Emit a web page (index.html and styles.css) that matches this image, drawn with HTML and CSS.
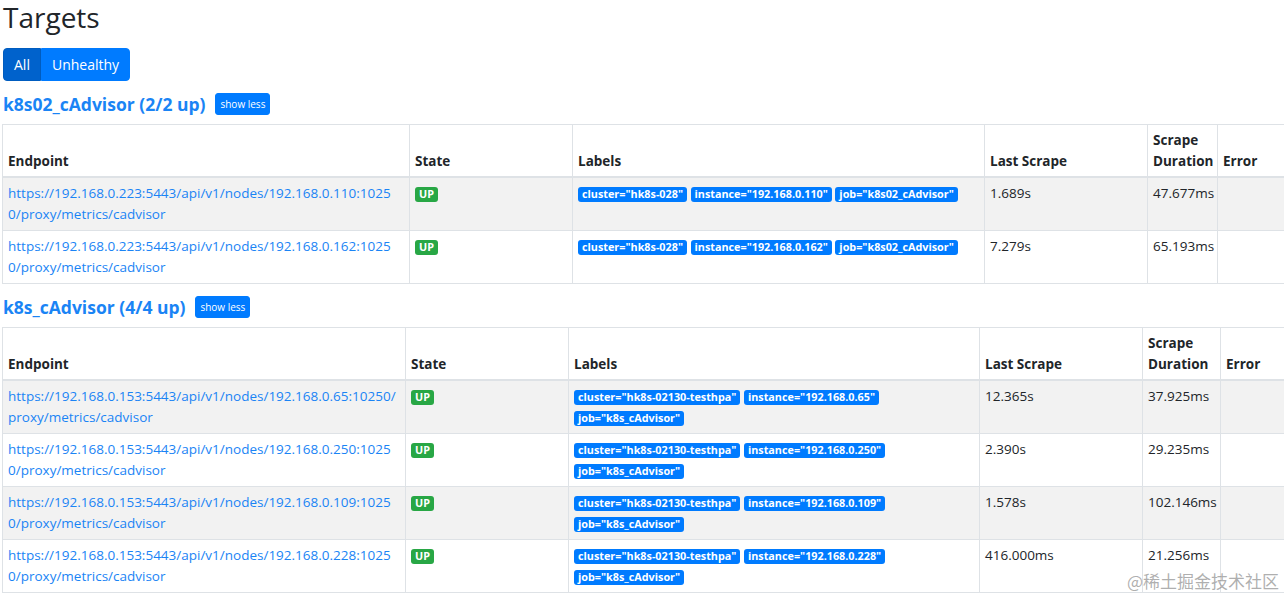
FILE: index.html
```html
<!DOCTYPE html>
<html lang="en">
<head>
    <meta charset="UTF-8">
    <meta name="viewport" content="width=device-width, initial-scale=1.0">
    <title>Prometheus Time Series Collection and Processing Server</title>
    <link rel="stylesheet" href="styles.css">
</head>
<body>
    <div class="container">
        <h1 class="title">Targets</h1>

        <!-- Filter -->
        <div class="btn-group">
            <button class="btn btn-primary active">All</button>
            <button class="btn btn-primary">Unhealthy</button>
        </div>

        <!-- Pool: k8s02_cAdvisor -->
        <section class="pool">
            <div class="pool-head">
                <a class="pool-name" href="#pool-k8s02_cAdvisor">k8s02_cAdvisor (2/2 up)</a>
                <button class="btn btn-primary btn-xs">show less</button>
            </div>
            <table class="table targets targets-a">
                <colgroup>
                    <col class="col-endpoint">
                    <col class="col-state">
                    <col class="col-labels">
                    <col class="col-last">
                    <col class="col-duration">
                    <col>
                </colgroup>
                <thead>
                    <tr>
                        <th>Endpoint</th>
                        <th>State</th>
                        <th>Labels</th>
                        <th>Last Scrape</th>
                        <th>Scrape Duration</th>
                        <th>Error</th>
                    </tr>
                </thead>
                <tbody>
                    <tr>
                        <td class="endpoint"><a href="#">https://192.168.0.223:5443/api/v1/nodes/192.168.0.110:10250/proxy/metrics/cadvisor</a></td>
                        <td><span class="badge badge-success">UP</span></td>
                        <td class="labels">
                            <span class="badge badge-primary">cluster="hk8s-028"</span>
                            <span class="badge badge-primary">instance="192.168.0.110"</span>
                            <span class="badge badge-primary">job="k8s02_cAdvisor"</span>
                        </td>
                        <td>1.689s</td>
                        <td>47.677ms</td>
                        <td></td>
                    </tr>
                    <tr>
                        <td class="endpoint"><a href="#">https://192.168.0.223:5443/api/v1/nodes/192.168.0.162:10250/proxy/metrics/cadvisor</a></td>
                        <td><span class="badge badge-success">UP</span></td>
                        <td class="labels">
                            <span class="badge badge-primary">cluster="hk8s-028"</span>
                            <span class="badge badge-primary">instance="192.168.0.162"</span>
                            <span class="badge badge-primary">job="k8s02_cAdvisor"</span>
                        </td>
                        <td>7.279s</td>
                        <td>65.193ms</td>
                        <td></td>
                    </tr>
                </tbody>
            </table>
        </section>

        <!-- Pool: k8s_cAdvisor -->
        <section class="pool">
            <div class="pool-head">
                <a class="pool-name" href="#pool-k8s_cAdvisor">k8s_cAdvisor (4/4 up)</a>
                <button class="btn btn-primary btn-xs">show less</button>
            </div>
            <table class="table targets targets-b">
                <colgroup>
                    <col class="col-endpoint">
                    <col class="col-state">
                    <col class="col-labels">
                    <col class="col-last">
                    <col class="col-duration">
                    <col>
                </colgroup>
                <thead>
                    <tr>
                        <th>Endpoint</th>
                        <th>State</th>
                        <th>Labels</th>
                        <th>Last Scrape</th>
                        <th>Scrape Duration</th>
                        <th>Error</th>
                    </tr>
                </thead>
                <tbody>
                    <tr>
                        <td class="endpoint"><a href="#">https://192.168.0.153:5443/api/v1/nodes/192.168.0.65:10250/proxy/metrics/cadvisor</a></td>
                        <td><span class="badge badge-success">UP</span></td>
                        <td class="labels">
                            <span class="badge badge-primary">cluster="hk8s-02130-testhpa"</span>
                            <span class="badge badge-primary">instance="192.168.0.65"</span>
                            <span class="badge badge-primary">job="k8s_cAdvisor"</span>
                        </td>
                        <td>12.365s</td>
                        <td>37.925ms</td>
                        <td></td>
                    </tr>
                    <tr>
                        <td class="endpoint"><a href="#">https://192.168.0.153:5443/api/v1/nodes/192.168.0.250:10250/proxy/metrics/cadvisor</a></td>
                        <td><span class="badge badge-success">UP</span></td>
                        <td class="labels">
                            <span class="badge badge-primary">cluster="hk8s-02130-testhpa"</span>
                            <span class="badge badge-primary">instance="192.168.0.250"</span>
                            <span class="badge badge-primary">job="k8s_cAdvisor"</span>
                        </td>
                        <td>2.390s</td>
                        <td>29.235ms</td>
                        <td></td>
                    </tr>
                    <tr>
                        <td class="endpoint"><a href="#">https://192.168.0.153:5443/api/v1/nodes/192.168.0.109:10250/proxy/metrics/cadvisor</a></td>
                        <td><span class="badge badge-success">UP</span></td>
                        <td class="labels">
                            <span class="badge badge-primary">cluster="hk8s-02130-testhpa"</span>
                            <span class="badge badge-primary">instance="192.168.0.109"</span>
                            <span class="badge badge-primary">job="k8s_cAdvisor"</span>
                        </td>
                        <td>1.578s</td>
                        <td>102.146ms</td>
                        <td></td>
                    </tr>
                    <tr>
                        <td class="endpoint"><a href="#">https://192.168.0.153:5443/api/v1/nodes/192.168.0.228:10250/proxy/metrics/cadvisor</a></td>
                        <td><span class="badge badge-success">UP</span></td>
                        <td class="labels">
                            <span class="badge badge-primary">cluster="hk8s-02130-testhpa"</span>
                            <span class="badge badge-primary">instance="192.168.0.228"</span>
                            <span class="badge badge-primary">job="k8s_cAdvisor"</span>
                        </td>
                        <td>416.000ms</td>
                        <td>21.256ms</td>
                        <td></td>
                    </tr>
                </tbody>
            </table>
        </section>
    </div>

    <div class="watermark">@稀土掘金技术社区</div>
</body>
</html>
```

FILE: styles.css
```css
html {
    overflow-x: hidden;
}

body {
    font-family: "Open Sans", "Noto Sans", Arial, sans-serif;
    font-size: 13.5px;
    line-height: 21px;
    margin: 0;
    padding: 0;
    background-color: #fff;
    color: #212529;
}

a {
    color: #1a84f5;
    text-decoration: none;
}

.container {
    padding: 0 0 0 2px;
}

.title {
    font-size: 28px;
    font-weight: 500;
    line-height: 34px;
    margin: 0 0 14px 1px;
}

/* Buttons */
.btn {
    display: inline-block;
    font-family: inherit;
    font-size: 14px;
    line-height: 21px;
    padding: 5px 10px;
    border: 1px solid transparent;
    border-radius: 4px;
    cursor: pointer;
}

.btn-primary {
    color: #fff;
    background-color: #007bff;
    border-color: #007bff;
}

.btn-primary.active {
    background-color: #0062cc;
    border-color: #005cbf;
}

.btn-group {
    display: flex;
    margin: 0 0 12px 1px;
}

.btn-group .btn:first-child {
    border-radius: 4px 0 0 4px;
}

.btn-group .btn:last-child {
    border-radius: 0 4px 4px 0;
}

.btn-xs {
    font-size: 10px;
    line-height: 14px;
    padding: 3px 4px;
    border-radius: 3px;
    margin-left: 10px;
}

/* Scrape pools */
.pool {
    margin-bottom: 12px;
}

.pool-head {
    display: flex;
    align-items: center;
    height: 22px;
    margin: 0 0 9px 1px;
}

.pool-name {
    font-size: 17.5px;
    font-weight: 700;
    line-height: 21px;
}

/* Targets table */
.table {
    border-collapse: collapse;
    table-layout: fixed;
    width: 1320px;
    border: 1px solid #dee2e6;
}

.table th, .table td {
    border: 1px solid #dee2e6;
    padding: 5px 5px;
    text-align: left;
    vertical-align: top;
}

.table th {
    font-weight: 700;
    vertical-align: bottom;
    padding-bottom: 4px;
    border-bottom-width: 2px;
}

.table tbody tr:nth-child(odd) {
    background-color: #f2f2f2;
}

.endpoint {
    word-break: break-all;
}

.targets-a .endpoint {
    padding-right: 10px;
}

.targets-a .col-endpoint { width: 407px; }
.targets-a .col-state { width: 163px; }
.targets-a .col-labels { width: 412px; }
.targets-a .col-last { width: 163px; }
.targets-a .col-duration { width: 70px; }

.targets-b .col-endpoint { width: 403px; }
.targets-b .col-state { width: 163px; }
.targets-b .col-labels { width: 411px; }
.targets-b .col-last { width: 163px; }
.targets-b .col-duration { width: 78px; }

/* Badges */
.badge {
    display: inline-block;
    font-size: 10.8px;
    font-weight: 700;
    line-height: 1;
    padding: 2.5px 4px;
    border-radius: 3px;
    color: #fff;
    white-space: nowrap;
}

.badge-success {
    background-color: #28a745;
}

.badge-primary {
    background-color: #007bff;
}

.labels .badge {
    margin-bottom: 1px;
}

.watermark {
    position: absolute;
    right: 5px;
    bottom: 2px;
    font-family: "Noto Sans CJK SC", sans-serif;
    font-size: 17px;
    color: rgba(140, 140, 140, 0.7);
}
```
